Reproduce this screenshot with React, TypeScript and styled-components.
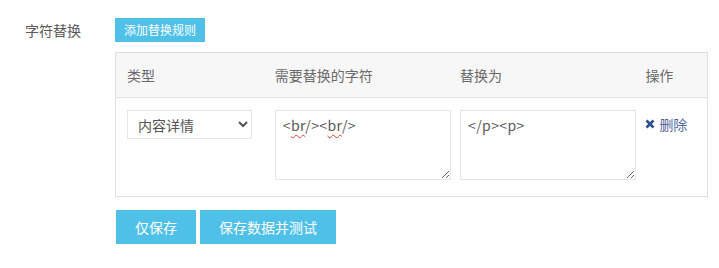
import React from "react";
import styled, { createGlobalStyle } from "styled-components";

const Global = createGlobalStyle`
  html, body { margin: 0; padding: 0; background: #fff; }
  body { font-family: "Noto Sans CJK SC", "Noto Sans", sans-serif; color: #555; }
  * { box-sizing: border-box; }
`;

const Page = styled.div`
  padding-top: 18px;
`;

const FormRow = styled.div`
  display: flex;
  align-items: flex-start;
`;

const Label = styled.div`
  width: 115px;
  padding-left: 25px;
  font-size: 14px;
  line-height: 24px;
  color: #5a5a5a;
`;

const Field = styled.div`
  display: flex;
  flex-direction: column;
  align-items: flex-start;
`;

const Button = styled.button<{ $size?: "sm" | "lg"; $w?: number }>`
  background: #4fc1e9;
  color: #fff;
  border: none;
  margin: 0;
  font-family: "Noto Sans CJK SC", sans-serif;
  cursor: pointer;
  padding: 0;
  width: ${(p) => p.$w}px;
  height: ${(p) => (p.$size === "sm" ? 24 : 34)}px;
  font-size: ${(p) => (p.$size === "sm" ? 12 : 14)}px;
  line-height: 1;
`;

const Table = styled.table`
  margin-top: 10px;
  width: 593px;
  border: 1px solid #dedede;
  border-collapse: collapse;
  table-layout: fixed;
`;

const Th = styled.th<{ $w: number }>`
  width: ${(p) => p.$w}px;
  background: #f7f7f7;
  border-bottom: 1px solid #e2e2e2;
  height: 45px;
  padding: 0 11px;
  text-align: left;
  font-weight: normal;
  font-size: 14px;
  color: #6a6a6a;
`;

const Td = styled.td`
  padding: 12px 11px 16px;
  vertical-align: top;
`;

const Select = styled.select`
  width: 125px;
  height: 29px;
  border: 1px solid #e6e6e6;
  background: #fff;
  font-family: "Noto Sans CJK SC", sans-serif;
  font-size: 14px;
  color: #555;
  padding: 0 6px;
  outline: none;
`;

const TextBox = styled.div`
  display: block;
  width: 176px;
  height: 70px;
  border: 1px solid #e6e6e6;
  font-family: "Noto Sans CJK SC", sans-serif;
  font-size: 14px;
  letter-spacing: 0.4px;
  line-height: 18px;
  color: #5a5a5a;
  padding: 5px 7px;
  resize: both;
  overflow: auto;
  outline: none;
  white-space: pre-wrap;
  background: #fff;
`;

const Misspelled = styled.span`
  text-decoration: underline wavy #e04040;
  text-decoration-thickness: 1px;
  text-underline-offset: 3px;
  text-decoration-skip-ink: none;
`;

const DeleteLink = styled.a`
  display: inline-flex;
  align-items: center;
  gap: 4px;
  font-size: 14px;
  line-height: 20px;
  color: #5468a0;
  text-decoration: none;
  cursor: pointer;
`;

const Actions = styled.div`
  display: flex;
  gap: 4px;
  margin-top: 13px;
  margin-left: 1px;
`;

export default function App() {
  return (
    <Page>
      <Global />
      <FormRow>
        <Label>字符替换</Label>
        <Field>
          <Button $size="sm" $w={90}>添加替换规则</Button>
          <Table>
            <thead>
              <tr>
                <Th $w={148}>类型</Th>
                <Th $w={185}>需要替换的字符</Th>
                <Th $w={185}>替换为</Th>
                <Th $w={73}>操作</Th>
              </tr>
            </thead>
            <tbody>
              <tr>
                <Td>
                  <Select defaultValue="content">
                    <option value="content">内容详情</option>
                  </Select>
                </Td>
                <Td>
                  <TextBox role="textbox" contentEditable suppressContentEditableWarning>
                    {"<"}<Misspelled>br</Misspelled>{"/><"}<Misspelled>br</Misspelled>{"/>"}
                  </TextBox>
                </Td>
                <Td>
                  <TextBox role="textbox" contentEditable suppressContentEditableWarning>
                    {"</p><p>"}
                  </TextBox>
                </Td>
                <Td>
                  <DeleteLink>
                    <svg width="10" height="10" viewBox="0 0 10 10">
                      <path d="M1.5 1.5 L8.5 8.5 M8.5 1.5 L1.5 8.5" stroke="#2d4f8c" strokeWidth="2.6" strokeLinecap="butt" />
                    </svg>
                    删除
                  </DeleteLink>
                </Td>
              </tr>
            </tbody>
          </Table>
          <Actions>
            <Button $w={80}>仅保存</Button>
            <Button $w={136}>保存数据并测试</Button>
          </Actions>
        </Field>
      </FormRow>
    </Page>
  );
}
